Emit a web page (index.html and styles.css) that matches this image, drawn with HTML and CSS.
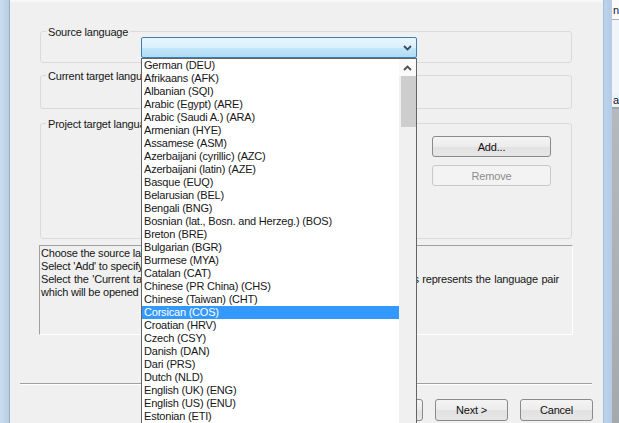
FILE: index.html
```html
<!DOCTYPE html>
<html>
<head>
<meta charset="utf-8">
<link rel="stylesheet" href="styles.css">
</head>
<body>
<div class="frame-l"></div>
<div class="dialog">
  <div class="group g1">
    <span class="legend">Source language</span>
    <div class="combo">
      <svg class="chev" width="9" height="6" viewBox="0 0 9 6"><path d="M1 1 L4.5 4.5 L8 1" fill="none" stroke="#3a4a5e" stroke-width="1.8"/></svg>
    </div>
  </div>
  <div class="group g2">
    <span class="legend">Current target language</span>
  </div>
  <div class="group g3">
    <span class="legend">Project target languages</span>
    <div class="g3-row">
      <div class="side-btns">
        <div class="btn wide">Add...</div>
        <div class="btn wide disabled">Remove</div>
      </div>
    </div>
  </div>
  <div class="desc">
    <div class="line">Choose the source language of the project.</div>
    <div class="line">Select 'Add' to specify the project target languages.</div>
    <div class="line just">Select the 'Current target language' which you would like to work with first. This represents the language pair</div>
    <div class="line">which will be opened first.</div>
  </div>
  <div class="sep"></div>
  <div class="actions">
    <div class="btn std">&lt; Back</div>
    <div class="btn std">Next &gt;</div>
    <div class="btn std">Cancel</div>
  </div>

  <div class="dropdown">
    <ul class="items">
      <li>German (DEU)</li>
      <li>Afrikaans (AFK)</li>
      <li>Albanian (SQI)</li>
      <li>Arabic (Egypt) (ARE)</li>
      <li>Arabic (Saudi A.) (ARA)</li>
      <li>Armenian (HYE)</li>
      <li>Assamese (ASM)</li>
      <li>Azerbaijani (cyrillic) (AZC)</li>
      <li>Azerbaijani (latin) (AZE)</li>
      <li>Basque (EUQ)</li>
      <li>Belarusian (BEL)</li>
      <li>Bengali (BNG)</li>
      <li>Bosnian (lat., Bosn. and Herzeg.) (BOS)</li>
      <li>Breton (BRE)</li>
      <li>Bulgarian (BGR)</li>
      <li>Burmese (MYA)</li>
      <li>Catalan (CAT)</li>
      <li>Chinese (PR China) (CHS)</li>
      <li>Chinese (Taiwan) (CHT)</li>
      <li class="sel">Corsican (COS)</li>
      <li>Croatian (HRV)</li>
      <li>Czech (CSY)</li>
      <li>Danish (DAN)</li>
      <li>Dari (PRS)</li>
      <li>Dutch (NLD)</li>
      <li>English (UK) (ENG)</li>
      <li>English (US) (ENU)</li>
      <li>Estonian (ETI)</li>
      <li>Faroese (FOS)</li>
    </ul>
    <div class="scroll">
      <div class="sb-up">
        <svg width="9" height="6" viewBox="0 0 9 6"><path d="M1 5 L4.5 1.5 L8 5" fill="none" stroke="#505050" stroke-width="1.8"/></svg>
      </div>
      <div class="sb-thumb"></div>
      <div class="sb-track"></div>
    </div>
  </div>
</div>
<div class="frame-r"></div>
<div class="peek">
  <div class="peek-top">n</div>
  <div class="peek-mid"></div>
  <div class="peek-tab">ai</div>
  <div class="peek-low"></div>
</div>
</body>
</html>
```

FILE: styles.css
```css
html, body {
  margin: 0;
  padding: 0;
}
body {
  width: 619px;
  height: 423px;
  overflow: hidden;
  display: flex;
  background: #f0f0f0;
  font-family: "Liberation Sans", Arial, sans-serif;
  font-size: 11px;
  letter-spacing: -0.2px;
  color: #161616;
}
.frame-l {
  width: 9px;
  flex: none;
  background: linear-gradient(to right, #cbdcee, #b7cee6);
  border-right: 1px solid #93acc8;
}
.dialog {
  width: 593px;
  flex: none;
  position: relative;
  box-sizing: border-box;
  padding-top: 29px;
  display: flex;
  flex-direction: column;
  background: #f0f0f0;
  border-top: 2px solid #f7f7f7;
}
.frame-r {
  width: 8px;
  flex: none;
  background: linear-gradient(to right, #bcd3eb, #b3cbe4);
  border-left: 1px solid #a6bfd9;
}
.peek {
  width: 7px;
  flex: none;
  display: flex;
  flex-direction: column;
  overflow: hidden;
  line-height: 12px;
}
.peek-top {
  height: 20px;
  background: #fbfbfb;
  border-bottom: 1px solid #b0b0b0;
  padding-top: 4px;
  box-sizing: border-box;
  padding-left: 1px;
}
.peek-mid {
  height: 74px;
  background: #f1f4f8;
}
.peek-tab {
  height: 13px;
  background: #eef1f5;
  border-bottom: 2px solid #9aa4ad;
  padding-left: 1px;
}
.peek-low {
  flex: 1;
  background: linear-gradient(#b5b9bd, #a6a9ac);
}

/* group boxes */
.group {
  margin-left: 30px;
  width: 532px;
  box-sizing: border-box;
  border: 1px solid #dadada;
  border-radius: 3px;
}
.g1 { height: 32px; }
.g2 { height: 34px; margin-top: 12px; }
.g3 { height: 116px; margin-top: 14px; }
.legend {
  display: block;
  width: fit-content;
  margin: -7px 0 0 5px;
  padding: 0 2px;
  line-height: 14px;
  background: #f0f0f0;
  white-space: nowrap;
}
.combo {
  margin: -2px 0 0 100px;
  width: 276px;
  height: 21px;
  box-sizing: border-box;
  border: 1px solid #3c7fb1;
  border-radius: 2px;
  background: linear-gradient(#eaf6fd 0%, #d9f0fc 50%, #c4e7fb 51%, #b0dcf5 100%);
  display: flex;
  align-items: center;
  justify-content: flex-end;
  padding-right: 4px;
}
.g3-row {
  display: flex;
  justify-content: flex-end;
  padding-right: 20px;
}
.side-btns {
  display: flex;
  flex-direction: column;
  gap: 8px;
  margin-top: 5px;
}
.btn {
  box-sizing: border-box;
  height: 21px;
  border: 1px solid #8a8a8a;
  border-radius: 3px;
  background: linear-gradient(#f4f4f4 0%, #ececec 50%, #e2e2e2 51%, #e6e6e6 100%);
  display: flex;
  align-items: center;
  justify-content: center;
  color: #111;
}
.wide { width: 119px; }
.disabled {
  border-color: #c9c9c9;
  background: #f3f3f3;
  color: #8c8c8c;
}
.std { width: 73px; height: 22px; }

.desc {
  margin: 6px 0 0 29px;
  width: 534px;
  height: 90px;
  box-sizing: border-box;
  border-top: 1px solid #a0a0a0;
  border-left: 1px solid #a0a0a0;
  border-right: 1px solid #ffffff;
  border-bottom: 1px solid #ffffff;
  padding: 1px 0 0 1px;
  line-height: 13px;
  overflow: hidden;
}
.line {
  white-space: nowrap;
}
.line.just {
  width: 518px;
  white-space: normal;
  text-align: justify;
  text-align-last: justify;
}
.sep {
  margin: 48px 0 0 10px;
  width: 572px;
  height: 0;
  border-top: 1px solid #a0a0a0;
  border-bottom: 1px solid #ffffff;
}
.actions {
  display: flex;
  gap: 12px;
  margin-top: 14px;
  padding-left: 340px;
}

/* open dropdown list (overlay) */
.dropdown {
  position: absolute;
  left: 131px;
  top: 56px;
  width: 276px;
  height: 380px;
  box-sizing: border-box;
  border: 1px solid #646464;
  background: #ffffff;
  display: flex;
}
.items {
  list-style: none;
  margin: 0;
  padding: 0;
  flex: 1;
  min-width: 0;
}
.items li {
  height: 13px;
  line-height: 13px;
  padding-left: 2px;
  white-space: nowrap;
  overflow: hidden;
}
.items li.sel {
  background: #3399ff;
  color: #ffffff;
}
.scroll {
  width: 17px;
  flex: none;
  display: flex;
  flex-direction: column;
  background: #f0f0f0;
}
.sb-up {
  height: 17px;
  background: #fafafa;
  display: flex;
  align-items: center;
  justify-content: center;
}
.sb-thumb {
  height: 51px;
  margin: 0 0 0 2px;
  background: #cdcdcd;
}
.sb-track {
  flex: 1;
  background: #f0f0f0;
}
```
